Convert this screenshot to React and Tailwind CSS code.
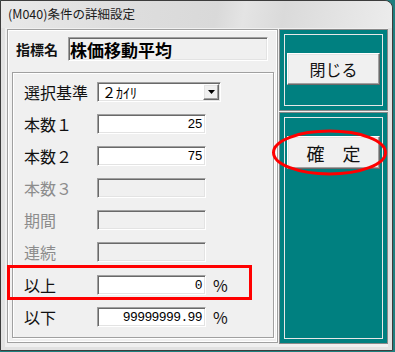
import React from 'react';

const JP = { fontFamily: '"Noto Sans CJK JP", "Noto Sans", sans-serif' };
const MONO = { fontFamily: '"Liberation Mono", "DejaVu Sans Mono", monospace' };

const sunken =
  'border border-t-[#a0a0a0] border-l-[#a0a0a0] border-r-white border-b-white shadow-[inset_1px_1px_0_#696969,inset_-1px_-1px_0_#e3e3e3]';
const raised =
  'border border-t-white border-l-white border-r-[#696969] border-b-[#696969] shadow-[inset_-1px_-1px_0_#a0a0a0,inset_1px_1px_0_#e3e3e3]';

const FIELDS = [
  { label: '本数１', value: '25' },
  { label: '本数２', value: '75' },
  { label: '本数３', disabled: true },
  { label: '期間', disabled: true },
  { label: '連続', disabled: true },
  { label: '以上', value: '0', pct: true },
  { label: '以下', value: '99999999.99', pct: true },
];

function Field({ label, value, disabled, pct }) {
  return (
    <div className="flex h-[20px] items-center">
      <span
        className={`w-[73px] text-[16px] leading-none ${disabled ? 'text-[#8c8c8c]' : 'text-[#111]'}`}
        style={JP}
      >
        {label}
      </span>
      <div
        className={`flex h-[20px] w-[109px] items-center justify-end pr-[3px] ${sunken} ${
          disabled ? 'bg-[#f0f0f0]' : 'bg-white'
        }`}
      >
        <span className="text-[13px] leading-none tracking-[-0.6px] text-black" style={MONO}>
          {value}
        </span>
      </div>
      {pct && (
        <span className="ml-[7px] text-[16px] leading-none text-[#111]" style={JP}>
          %
        </span>
      )}
    </div>
  );
}

function TealPanel({ className, children }) {
  return (
    <div className={`border border-[#8a8a8a] bg-[#008080] p-[4px] ${className}`}>
      <div className="flex h-full flex-col items-center border border-[#e8e8e8] pt-[18px]">
        {children}
      </div>
    </div>
  );
}

export default function App() {
  return (
    <div className="relative h-[352px] w-[395px] overflow-hidden bg-[#1f7f7f]">
      <div className="flex h-[351px] w-[393px] flex-col rounded-tr-[8px] border border-[#3c3c3c] bg-[#e2e2e2]">
        {/* title bar */}
        <div className="flex h-[27px] items-center rounded-tr-[8px] bg-[linear-gradient(100deg,#e9e9e9_0%,#dedede_30%,#d9d9d9_55%,#e4e4e4_62%,#dadada_72%,#ececec_100%)] pl-[7px]">
          <span className="text-[12.5px] leading-none text-[#1a1a1a]" style={JP}>
            (M040)条件の詳細設定
          </span>
        </div>

        {/* client area */}
        <div className="mx-[4px] flex flex-1 gap-[1px] bg-[#f0f0f0] pt-[1px] pl-[2px]">
          {/* left panel */}
          <div className="flex h-[314px] w-[271px] flex-col border border-[#a0a0a0] shadow-[inset_1px_1px_0_#fff,inset_-1px_-1px_0_#fff] px-[4px] pt-[7px]">
            <div className="flex h-[24px] items-center">
              <span className="w-[56px] pl-[4px] text-[14px] font-bold leading-none text-[#111]" style={JP}>
                指標名
              </span>
              <div className={`flex h-[24px] w-[200px] items-center bg-[#f0f0f0] pl-[1px] ${sunken}`}>
                <span className="text-[17px] font-bold leading-none text-black" style={JP}>
                  株価移動平均
                </span>
              </div>
            </div>

            <div className="mt-[11px] flex h-[266px] w-[262px] flex-col gap-[12px] border border-[#a0a0a0] pl-[11px] pt-[9px] shadow-[inset_1px_1px_0_#fff,1px_1px_0_#fff]">
              <div className="flex h-[20px] items-center">
                <span className="w-[73px] text-[16px] leading-none text-[#111]" style={JP}>
                  選択基準
                </span>
                <div className={`flex h-[20px] w-[124px] items-center justify-between bg-white pl-[4px] pr-[1px] ${sunken}`}>
                  <span className="text-[14px] leading-none text-black" style={JP}>
                    ２ｶｲﾘ
                  </span>
                  <div className={`flex h-[16px] w-[16px] items-center justify-center bg-[#f0f0f0] ${raised}`}>
                    <svg width="7" height="4" viewBox="0 0 7 4">
                      <polygon points="0,0 7,0 3.5,4" fill="#000" />
                    </svg>
                  </div>
                </div>
              </div>
              {FIELDS.map((f, i) => (
                <div key={f.label} className={i === 5 ? 'mt-[1px]' : ''}>
                  <Field {...f} />
                </div>
              ))}
            </div>
          </div>

          {/* right column */}
          <div className="flex w-[111px] flex-col gap-[1px]">
            <TealPanel className="h-[82px]">
              <button className={`flex h-[32px] w-[93px] items-center justify-center bg-[#f0f0f0] ${raised}`}>
                <span className="text-[16px] leading-none text-[#111]" style={JP}>
                  閉じる
                </span>
              </button>
            </TealPanel>
            <TealPanel className="h-[232px]">
              <button className={`flex h-[33px] w-[93px] items-center justify-center bg-[#f0f0f0] ${raised}`}>
                <span className="text-[18px] leading-none text-[#111]" style={JP}>
                  確　定
                </span>
              </button>
            </TealPanel>
          </div>
        </div>
        <div className="h-[3px]" />
      </div>

      {/* red annotations */}
      <div className="pointer-events-none absolute left-[7px] top-[265px] h-[35px] w-[245px] border-[3px] border-[#ff0000]" />
      <svg className="pointer-events-none absolute left-0 top-0" width="395" height="352">
        <ellipse cx="329.5" cy="152.5" rx="56" ry="21.5" fill="none" stroke="#ff0000" strokeWidth="3" />
      </svg>
    </div>
  );
}
